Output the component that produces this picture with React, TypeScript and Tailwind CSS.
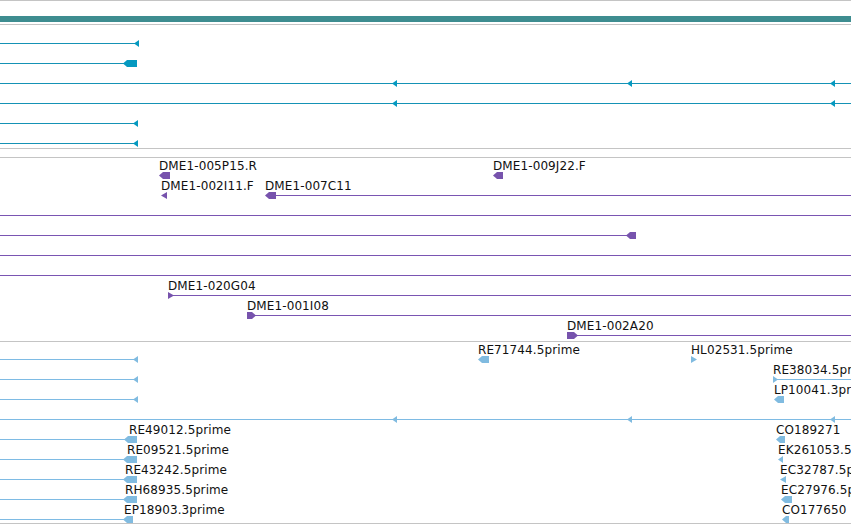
import React from "react";

type Kind = "arrowL" | "boxL" | "arrowR" | "boxR";
type Glyph = { x: number; w: number; kind: Kind };
type Label = { x: number; text: string };
type RowDef = { lines: [number, number][]; glyphs: Glyph[]; labels?: Label[] };

const END = 851;
const full: [number, number][] = [[0, END]];

function points(kind: Kind, w: number): string {
  const h = 7;
  const m = 3.5;
  switch (kind) {
    case "arrowL":
      return `0,${m} ${w},0 ${w},${h}`;
    case "arrowR":
      return `0,0 ${w},${m} 0,${h}`;
    case "boxL":
      return `0,${m} 4,0 ${w},0 ${w},${h} 4,${h}`;
    case "boxR":
      return `0,0 ${w - 4},0 ${w},${m} ${w - 4},${h} 0,${h}`;
  }
}

type Theme = { line: string; glyph: string };

function Row({ row, lineY, theme }: { row: RowDef; lineY: number; theme: Theme }) {
  return (
    <div className="relative h-[20px] w-full">
      {row.lines.map(([a, b], i) => (
        <div
          key={"l" + i}
          className={`absolute h-px ${theme.line}`}
          style={{ left: a, width: b - a, top: lineY }}
        />
      ))}
      {row.glyphs.map((g, i) => (
        <svg
          key={"g" + i}
          className={`absolute ${theme.glyph}`}
          style={{ left: g.x, top: lineY - 3 }}
          width={g.w}
          height={7}
          viewBox={`0 0 ${g.w} 7`}
        >
          <polygon points={points(g.kind, g.w)} />
        </svg>
      ))}
      {(row.labels || []).map((l, i) => (
        <div
          key={"t" + i}
          className="absolute top-px whitespace-nowrap text-[12px] leading-[14px] tracking-[0.1px] text-[#111111]"
          style={{ left: l.x }}
        >
          {l.text}
        </div>
      ))}
    </div>
  );
}

const tealRows: RowDef[] = [
  { lines: [[0, 136]], glyphs: [{ x: 134, w: 5, kind: "arrowL" }] },
  { lines: [[0, 125]], glyphs: [{ x: 123, w: 14, kind: "boxL" }] },
  {
    lines: full,
    glyphs: [
      { x: 392, w: 5, kind: "arrowL" },
      { x: 627, w: 5, kind: "arrowL" },
      { x: 830, w: 5, kind: "arrowL" },
    ],
  },
  {
    lines: full,
    glyphs: [
      { x: 392, w: 5, kind: "arrowL" },
      { x: 830, w: 5, kind: "arrowL" },
    ],
  },
  { lines: [[0, 136]], glyphs: [{ x: 133, w: 5, kind: "arrowL" }] },
  { lines: [[0, 136]], glyphs: [{ x: 133, w: 5, kind: "arrowL" }] },
];

const purpleRows: RowDef[] = [
  {
    lines: [],
    glyphs: [
      { x: 159, w: 11, kind: "boxL" },
      { x: 493, w: 10, kind: "boxL" },
    ],
    labels: [
      { x: 159, text: "DME1-005P15.R" },
      { x: 493, text: "DME1-009J22.F" },
    ],
  },
  {
    lines: [[270, END]],
    glyphs: [
      { x: 161, w: 6, kind: "arrowL" },
      { x: 265, w: 11, kind: "boxL" },
    ],
    labels: [
      { x: 161, text: "DME1-002I11.F" },
      { x: 265, text: "DME1-007C11" },
    ],
  },
  { lines: full, glyphs: [] },
  { lines: [[0, 630]], glyphs: [{ x: 626, w: 10, kind: "boxL" }] },
  { lines: full, glyphs: [] },
  { lines: full, glyphs: [] },
  {
    lines: [[170, END]],
    glyphs: [{ x: 168, w: 6, kind: "arrowR" }],
    labels: [{ x: 168, text: "DME1-020G04" }],
  },
  {
    lines: [[250, END]],
    glyphs: [{ x: 247, w: 9, kind: "boxR" }],
    labels: [{ x: 247, text: "DME1-001I08" }],
  },
  {
    lines: [[570, END]],
    glyphs: [{ x: 567, w: 11, kind: "boxR" }],
    labels: [{ x: 567, text: "DME1-002A20" }],
  },
];

const blueRows: RowDef[] = [
  {
    lines: [[0, 136]],
    glyphs: [
      { x: 133, w: 5, kind: "arrowL" },
      { x: 478, w: 11, kind: "boxL" },
      { x: 691, w: 6, kind: "arrowR" },
    ],
    labels: [
      { x: 478, text: "RE71744.5prime" },
      { x: 691, text: "HL02531.5prime" },
    ],
  },
  {
    lines: [
      [0, 136],
      [775, END],
    ],
    glyphs: [
      { x: 133, w: 5, kind: "arrowL" },
      { x: 773, w: 5, kind: "arrowR" },
    ],
    labels: [{ x: 773, text: "RE38034.5prime" }],
  },
  {
    lines: [[0, 136]],
    glyphs: [
      { x: 133, w: 5, kind: "arrowL" },
      { x: 774, w: 10, kind: "boxL" },
    ],
    labels: [{ x: 774, text: "LP10041.3prime" }],
  },
  {
    lines: full,
    glyphs: [
      { x: 392, w: 5, kind: "arrowL" },
      { x: 627, w: 5, kind: "arrowL" },
      { x: 830, w: 5, kind: "arrowL" },
    ],
  },
  {
    lines: [[0, 126]],
    glyphs: [
      { x: 124, w: 13, kind: "boxL" },
      { x: 776, w: 9, kind: "boxL" },
    ],
    labels: [
      { x: 129, text: "RE49012.5prime" },
      { x: 776, text: "CO189271" },
    ],
  },
  {
    lines: [[0, 125]],
    glyphs: [
      { x: 123, w: 14, kind: "boxL" },
      { x: 778, w: 5, kind: "arrowL" },
    ],
    labels: [
      { x: 127, text: "RE09521.5prime" },
      { x: 778, text: "EK261053.5prime" },
    ],
  },
  {
    lines: [[0, 125]],
    glyphs: [
      { x: 123, w: 14, kind: "boxL" },
      { x: 780, w: 6, kind: "arrowL" },
    ],
    labels: [
      { x: 125, text: "RE43242.5prime" },
      { x: 780, text: "EC32787.5prime" },
    ],
  },
  {
    lines: [[0, 125]],
    glyphs: [
      { x: 123, w: 14, kind: "boxL" },
      { x: 781, w: 11, kind: "boxL" },
    ],
    labels: [
      { x: 125, text: "RH68935.5prime" },
      { x: 781, text: "EC27976.5prime" },
    ],
  },
  {
    lines: [[0, 125]],
    glyphs: [
      { x: 123, w: 10, kind: "boxL" },
      { x: 782, w: 7, kind: "boxL" },
    ],
    labels: [
      { x: 124, text: "EP18903.3prime" },
      { x: 782, text: "CO177650" },
    ],
  },
];

const teal: Theme = { line: "bg-[#1592b5]", glyph: "fill-[#0599c0]" };
const purple: Theme = { line: "bg-[#7a55b2]", glyph: "fill-[#7753ad]" };
const blue: Theme = { line: "bg-[#7ebbe4]", glyph: "fill-[#80bbe0]" };

function Sep() {
  return <div className="h-px w-full bg-[#c4c4c4]" />;
}

export default function App() {
  return (
    <div
      className="w-[851px] h-[525px] overflow-hidden bg-white flex flex-col"
      style={{ fontFamily: '"DejaVu Sans", "Liberation Sans", sans-serif' }}
    >
      <Sep />
      <div className="h-[15px]" />
      <div className="h-[6px] w-full bg-[#3e8d90]" />
      <div className="h-[2px]" />
      <Sep />
      <div className="flex flex-col pt-[3px]">
        {tealRows.map((r, i) => (
          <Row key={i} row={r} lineY={15} theme={teal} />
        ))}
      </div>
      <Sep />
      <div className="h-[8px]" />
      <Sep />
      <div className="flex flex-col pb-[3px]">
        {purpleRows.map((r, i) => (
          <Row key={i} row={r} lineY={17} theme={purple} />
        ))}
      </div>
      <Sep />
      <div className="flex flex-col pb-[1px]">
        {blueRows.map((r, i) => (
          <Row key={i} row={r} lineY={17} theme={blue} />
        ))}
      </div>
      <Sep />
    </div>
  );
}
